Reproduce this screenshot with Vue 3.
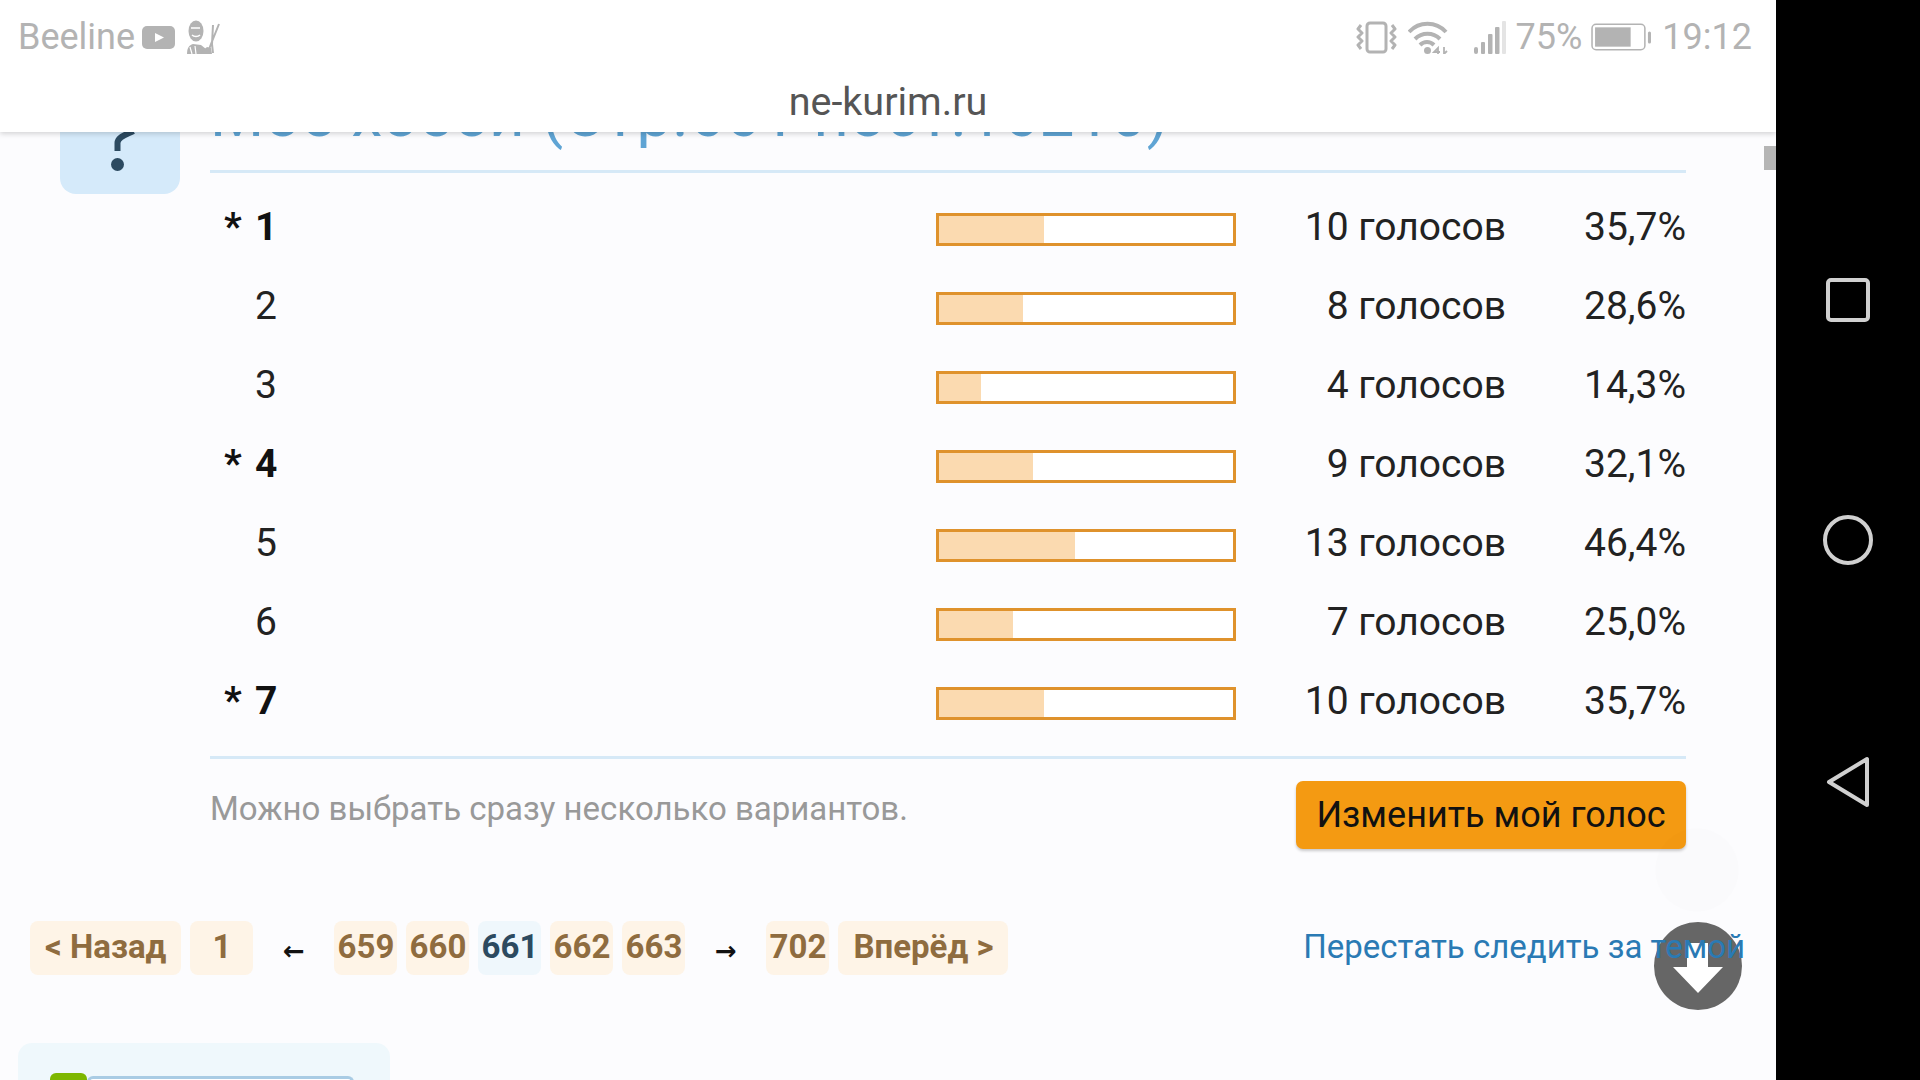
<template>
  <div class="device">
    <div class="screen">
      <header class="topbar">
        <div class="status">
          <div class="status-left">
            <span class="carrier">Beeline</span>
            <svg class="yt" viewBox="0 0 33 23"><rect width="33" height="23" rx="5" fill="#b3b3b3" /><path d="M13 7l9 4.500-9 4.500z" fill="#fff" /></svg>
            <svg class="man" viewBox="0 0 33 34" fill="none" stroke="#b3b3b3">
              <ellipse cx="9" cy="11" rx="7.500" ry="10.500" fill="#b3b3b3" stroke="none" />
              <path d="M4 8h9M5 15c2 2 6 2 8 0" stroke="#fff" stroke-width="1.500" />
              <path d="M0 34c0-6 2-9 6-10l8 1 5 4 3 5z" fill="#b3b3b3" stroke="none" />
              <path d="M3 27l2 7M8 26l1 8" stroke="#fff" stroke-width="1.200" />
              <path d="M32 4l-8 20-3 8M26 5l-1 19 1 9" stroke-width="2" />
              <path d="M14 32l6-5 4 1 1 6h-10z" fill="#b3b3b3" stroke="none" />
            </svg>
          </div>
          <div class="status-right">
            <svg class="vib" viewBox="0 0 41 33" fill="none" stroke="#b3b3b3" stroke-width="3" stroke-linejoin="round">
              <rect x="11" y="2" width="19" height="29" rx="3" />
              <path d="M5 4L2 8l4 4-4 4 4 4-4 4 3 4M36 4l3 4-4 4 4 4-4 4 4 4-3 4" />
            </svg>
            <svg class="wifi" viewBox="0 0 40 33" fill="none" stroke="#b3b3b3" stroke-width="4">
              <path d="M1 11c10-11 27-11 37 0M7 18c7-7 18-7 25 0M12 24c4-4 10-4 14 0" />
              <circle cx="19.500" cy="29.500" r="3.500" fill="#b3b3b3" stroke="none" />
              <path d="M30 33v-6l-4 4h6M36 26v7l3-3" stroke-width="1.800" />
            </svg>
            <svg class="signal" viewBox="0 0 35 35">
              <rect x="2" y="27" width="4" height="7" rx="2" fill="#b3b3b3" />
              <rect x="9" y="22" width="4" height="12" rx="1" fill="#b3b3b3" />
              <rect x="16" y="14" width="4.500" height="20" rx="1" fill="#b3b3b3" />
              <rect x="23" y="7" width="4.500" height="27" rx="1" fill="#b3b3b3" />
              <rect x="30" y="1" width="4" height="33" rx="1" fill="#e4e4e4" />
            </svg>
            <span class="pct">75%</span>
            <svg class="batt" viewBox="0 0 60 27">
              <rect x="1" y="1" width="52" height="25" rx="4" fill="none" stroke="#b3b3b3" stroke-width="1.500" />
              <rect x="4" y="4" width="35" height="19" fill="#b3b3b3" />
              <rect x="56" y="8" width="3" height="12" rx="1.500" fill="#b3b3b3" />
            </svg>
            <span class="clock">19:12</span>
          </div>
        </div>
        <div class="domain">ne-kurim.ru</div>
      </header>

      <main class="page">
        <section class="poll">
          <div class="qbox">
            <svg viewBox="60 64 120 129">
              <path d="M117.500 151v-8c0-6 8-8 16-12" fill="none" stroke="#2c4a60" stroke-width="6" />
              <circle cx="117.500" cy="164.500" r="6.500" fill="#2c4a60" />
            </svg>
          </div>
          <div class="poll-body">
            <h2 class="poll-title">Мое хобби (Стр.661 пост.16210)</h2>
            <div class="results">
              <div v-for="row in rows" :key="row.label" class="row">
                <span class="label" :class="{ mine: row.mine }"><i>{{ row.mine ? '*' : '' }}</i>{{ row.label }}</span>
                <span class="bar"><span class="fill" :style="{ width: row.pct + '%' }" /></span>
                <span class="votes">{{ row.votes }} голосов</span>
                <span class="share">{{ row.share }}</span>
              </div>
            </div>
            <div class="poll-foot">
              <span class="hint">Можно выбрать сразу несколько вариантов.</span>
              <button class="vote">Изменить мой голос</button>
            </div>
          </div>
        </section>

        <nav class="pager">
          <div class="pages">
            <a class="pg wide">&lt; Назад</a>
            <a class="pg">1</a>
            <span class="arrow">←</span>
            <a v-for="n in [659, 660]" :key="n" class="pg">{{ n }}</a>
            <a class="pg current">661</a>
            <a v-for="n in [662, 663]" :key="n" class="pg">{{ n }}</a>
            <span class="arrow">→</span>
            <a class="pg">702</a>
            <a class="pg wide">Вперёд &gt;</a>
          </div>
          <a class="unfollow">Перестать следить за темой</a>
        </nav>

        <div class="side-card"><span class="leaf" /><span class="field" /></div>
      </main>

      <span class="scroll-thumb" />
      <span class="ghost" />
      <span class="down">
        <svg viewBox="0 0 88 88"><path d="M33 21h21v24h15L44 71 19 45h14z" fill="#fff" /></svg>
      </span>
    </div>

    <aside class="navbar">
      <svg class="nav-ico" viewBox="0 0 44 44" fill="none" stroke="#d0d0d0" stroke-width="4"><rect x="2" y="2" width="40" height="40" rx="3" /></svg>
      <svg class="nav-ico" viewBox="0 0 52 52" fill="none" stroke="#d0d0d0" stroke-width="4"><circle cx="26" cy="26" r="23" /></svg>
      <svg class="nav-ico" viewBox="0 0 44 52" fill="none" stroke="#d0d0d0" stroke-width="4" stroke-linejoin="round"><path d="M41 3v46L3 26z" /></svg>
    </aside>
  </div>
</template>

<script setup>
const rows = [
  { label: 1, mine: true, pct: 35.7, votes: 10, share: '35,7%' },
  { label: 2, mine: false, pct: 28.6, votes: 8, share: '28,6%' },
  { label: 3, mine: false, pct: 14.3, votes: 4, share: '14,3%' },
  { label: 4, mine: true, pct: 32.1, votes: 9, share: '32,1%' },
  { label: 5, mine: false, pct: 46.4, votes: 13, share: '46,4%' },
  { label: 6, mine: false, pct: 25, votes: 7, share: '25,0%' },
  { label: 7, mine: true, pct: 35.7, votes: 10, share: '35,7%' },
]
</script>

<style>
html, body { margin: 0; background: #000; }
</style>

<style scoped>
.device {
  display: flex;
  width: 1920px;
  height: 1080px;
  overflow: hidden;
  font-family: Roboto, "Liberation Sans", sans-serif;
  background: #000;
}
.screen {
  position: relative;
  flex: 0 0 1776px;
  display: flex;
  flex-direction: column;
  overflow: hidden;
  background: #fcfcfe;
}
.navbar {
  flex: 1;
  display: flex;
  flex-direction: column;
  align-items: center;
  padding: 278px 0 0;
  gap: 192px;
}
.nav-ico:nth-child(1) { width: 44px; height: 44px; }
.nav-ico:nth-child(2) { width: 52px; height: 52px; }
.nav-ico:nth-child(3) { width: 44px; height: 52px; margin-top: -2px; }

/* top bar stays above the scrolled page */
.topbar {
  position: relative;
  z-index: 2;
  flex: 0 0 132px;
  background: #fff;
  box-shadow: 0 2px 5px rgba(0, 0, 0, .16);
}
.status {
  display: flex;
  justify-content: space-between;
  align-items: center;
  height: 74px;
  padding: 0 24px 0 18px;
  color: #b3b3b3;
  font-size: 36px;
}
.status-left, .status-right { display: flex; align-items: center; }
.yt { width: 33px; height: 23px; margin-left: 7px; }
.man { width: 33px; height: 34px; margin-left: 12px; }
.vib { width: 41px; height: 33px; }
.wifi { width: 40px; height: 33px; margin-left: 11px; }
.signal { width: 35px; height: 35px; margin-left: 24px; }
.pct { margin-left: 9px; }
.batt { width: 61px; height: 28px; margin-left: 9px; }
.clock { margin-left: 10px; }
.domain {
  text-align: center;
  font-size: 39.500px;
  line-height: 42px;
  color: #555;
  margin-top: 7px;
}

.page {
  flex: 1;
  margin-top: -68px;
  min-height: 0;
}
.poll {
  display: flex;
  padding: 0 90px 0 60px;
  align-items: flex-start;
}
.qbox {
  flex: 0 0 120px;
  height: 130px;
  border-radius: 16px;
  background: #d5eafa;
}
.qbox svg { display: block; width: 120px; height: 129px; }
.poll-body { flex: 1; margin-left: 30px; }
.poll-title {
  margin: 0;
  padding: 15px 0 19px;
  font-size: 62px;
  font-weight: 400;
  line-height: 72px;
  color: #5fa4d4;
  letter-spacing: .96px;
  white-space: nowrap;
  border-bottom: 3px solid #d6e9f7;
}
.results { padding-top: 14px; }
.row {
  display: flex;
  align-items: center;
  height: 79px;
  font-size: 39px;
  color: #222;
}
.label { width: 726px; display: flex; }
.label i {
  width: 45px;
  font-style: normal;
  padding-left: 14px;
  box-sizing: border-box;
}
.label.mine { font-weight: 700; color: #111; }
.bar {
  width: 300px;
  height: 33px;
  box-sizing: border-box;
  border: 3px solid #df922c;
  background: #fff;
  margin-top: 6px;
}
.fill { display: block; height: 100%; background: #fbdab0; }
.votes { width: 270px; text-align: right; }
.share { flex: 1; text-align: right; }
.poll-foot {
  display: flex;
  justify-content: space-between;
  align-items: flex-start;
  border-top: 3px solid #d6e9f7;
  margin-top: 16px;
  padding-top: 22px;
}
.hint { font-size: 33px; color: #999; margin-top: 8px; }
.vote {
  width: 390px;
  height: 68px;
  padding: 0;
  border: 0;
  border-radius: 7px;
  background: #f49a12;
  color: #111;
  font: 400 36px Roboto, sans-serif;
  box-shadow: 0 2px 3px rgba(0, 0, 0, .2);
}

.pager {
  display: flex;
  justify-content: space-between;
  align-items: center;
  margin-top: 72px;
  padding: 0 31px 0 30px;
}
.pages { display: flex; align-items: center; gap: 9px; }
.pg {
  width: 63px;
  height: 54px;
  border-radius: 8px;
  background: #fef4e7;
  color: #8f6c3f;
  font-size: 33px;
  font-weight: 700;
  line-height: 52px;
  text-align: center;
}
.pg.wide { width: auto; padding: 0 15px; }
.pg.current { background: #eff7fc; color: #2c4a60; }
.arrow {
  width: 63px;
  padding-top: 6px;
  text-align: center;
  font: 700 26px "DejaVu Sans", sans-serif;
  color: #111;
}
/* the link sits above the floating down button, as in the page */
.unfollow {
  position: relative;
  z-index: 1;
  margin-bottom: 4px;
  font-size: 33px;
  color: #2a7ab4;
}

.side-card {
  display: flex;
  align-items: flex-start;
  width: 372px;
  height: 80px;
  margin: 68px 0 0 18px;
  padding: 30px 0 0 32px;
  box-sizing: border-box;
  border-radius: 14px;
  background: #eff8fc;
}
.leaf { width: 37px; height: 12px; border-radius: 6px 6px 0 0; background: #7db700; }
.field { width: 267px; height: 12px; margin-top: 3px; border: 3px solid #a9cce4; border-bottom: 0; background: #fff; border-radius: 6px 6px 0 0; box-sizing: border-box; }

/* floating bits on top of the page */
.scroll-thumb { position: absolute; left: 1764px; top: 146px; width: 12px; height: 24px; background: #b5b5b5; }
.ghost { position: absolute; left: 1655px; top: 828px; width: 84px; height: 84px; border-radius: 50%; background: rgba(0, 0, 0, .006); }
.down { position: absolute; left: 1654px; top: 922px; width: 88px; height: 88px; border-radius: 50%; background: #666; }
.down svg { display: block; width: 88px; height: 88px; }
</style>
